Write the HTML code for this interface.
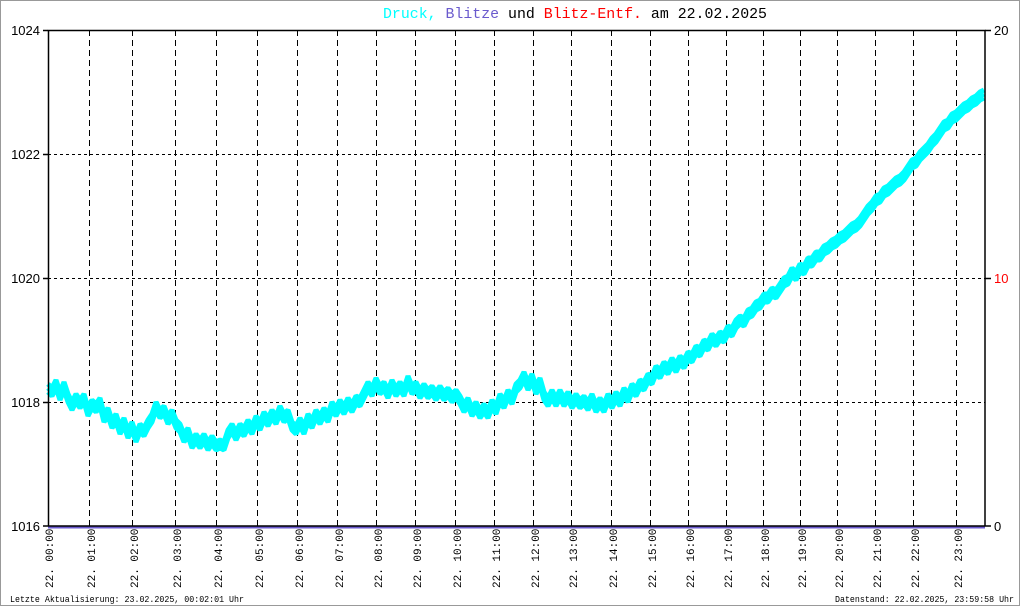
<!DOCTYPE html>
<html><head><meta charset="utf-8"><style>
html,body{margin:0;padding:0;background:#fff}
svg{display:block}
</style></head><body>
<svg width="1020" height="606" viewBox="0 0 1020 606" xmlns="http://www.w3.org/2000/svg" xmlns:xlink="http://www.w3.org/1999/xlink" font-family="Liberation Mono, monospace">
<rect x="0.5" y="0.5" width="1019" height="605" fill="#fff" stroke="#999"/>
<text y="18" font-size="15" x="383" textLength="384" lengthAdjust="spacingAndGlyphs"><tspan fill="#00ffff">Druck,</tspan> <tspan fill="#6a5acd">Blitze</tspan> <tspan fill="#000">und</tspan> <tspan fill="#ff0000">Blitz-Entf.</tspan> <tspan fill="#000">am 22.02.2025</tspan></text>
<g stroke="#000" stroke-width="1" stroke-dasharray="3,3">
<line x1="48" x2="985" y1="154.5" y2="154.5"/><line x1="48" x2="985" y1="278.5" y2="278.5"/><line x1="48" x2="985" y1="402.5" y2="402.5"/>
</g>
<g stroke="#000" stroke-width="1" stroke-dasharray="6,4">
<line x1="89.5" x2="89.5" y1="30" y2="526"/><line x1="132.5" x2="132.5" y1="30" y2="526"/><line x1="175.5" x2="175.5" y1="30" y2="526"/><line x1="216.5" x2="216.5" y1="30" y2="526"/><line x1="257.5" x2="257.5" y1="30" y2="526"/><line x1="297.5" x2="297.5" y1="30" y2="526"/><line x1="337.5" x2="337.5" y1="30" y2="526"/><line x1="376.5" x2="376.5" y1="30" y2="526"/><line x1="415.5" x2="415.5" y1="30" y2="526"/><line x1="455.5" x2="455.5" y1="30" y2="526"/><line x1="494.5" x2="494.5" y1="30" y2="526"/><line x1="533.5" x2="533.5" y1="30" y2="526"/><line x1="571.5" x2="571.5" y1="30" y2="526"/><line x1="611.5" x2="611.5" y1="30" y2="526"/><line x1="650.5" x2="650.5" y1="30" y2="526"/><line x1="688.5" x2="688.5" y1="30" y2="526"/><line x1="726.5" x2="726.5" y1="30" y2="526"/><line x1="763.5" x2="763.5" y1="30" y2="526"/><line x1="800.5" x2="800.5" y1="30" y2="526"/><line x1="837.5" x2="837.5" y1="30" y2="526"/><line x1="875.5" x2="875.5" y1="30" y2="526"/><line x1="913.5" x2="913.5" y1="30" y2="526"/><line x1="956.5" x2="956.5" y1="30" y2="526"/>
</g>
<defs>
<polyline id="c" fill="none" stroke="#00ffff" stroke-width="5" stroke-linejoin="bevel" points="
48,388 52,392 56,384 60,396 64,386 68,398 72,406 76,398 80,404 84,398 88,412 92,404 96,408 100,402 104,418 108,412 112,424 116,418 120,430 124,422 128,434 132,426 136,438 140,428 144,432 148,424 152,418 156,406 160,414 164,410 168,420 172,414 176,424 180,428 184,438 188,432 192,444 196,438 200,444 204,438 208,446 212,440 216,446 220,444 224,446 228,434 232,428 236,436 240,428 244,432 248,424 252,430 256,420 260,426 264,416 268,422 272,414 276,420 280,410 284,418 288,414 292,426 296,430 300,422 304,430 308,418 312,424 316,414 320,420 324,412 328,418 332,406 336,412 340,404 344,410 348,402 352,408 356,400 360,402 364,394 368,386 372,392 376,382 380,390 384,386 388,394 392,384 396,392 400,386 404,392 408,380 412,390 416,386 420,394 424,388 428,394 432,390 436,396 440,390 444,396 448,392 452,398 456,394 460,400 464,408 468,402 472,412 476,406 480,414 484,408 488,414 492,404 496,410 500,398 504,404 508,394 512,400 516,388 520,384 524,376 528,386 532,378 536,390 540,382 544,396 548,402 552,394 556,402 560,394 564,402 568,396 572,404 576,398 580,404 584,400 588,406 592,398 596,408 600,402 604,408 608,398 612,404 616,396 620,402 624,392 628,398 632,388 636,392 640,384 644,386 648,378 652,380 656,370 660,374 664,366 668,370 672,362 676,368 680,360 684,364 688,356 692,358 696,350 700,352 704,344 708,346 712,338 716,342 720,336 724,338 728,330 732,332 736,324 740,320 744,322 748,314 752,312 756,306 760,304 764,298 768,298 772,292 776,294 780,288 784,282 788,280 792,272 796,276 800,268 804,270 808,262 812,262 816,256 820,256 824,250 828,248 832,244 836,242 840,238 844,236 848,232 852,228 856,226 860,222 864,216 868,210 872,206 876,200 880,198 884,192 888,190 892,186 896,182 900,180 904,176 908,170 912,164 916,162 920,156 924,152 928,148 932,142 936,138 940,132 944,126 948,124 952,118 956,116 960,112 964,108 968,106 972,102 976,100 980,96 984,94"/>
</defs>
<use xlink:href="#c" href="#c" transform="translate(0,-4)"/>
<use xlink:href="#c" href="#c" transform="translate(0,4)"/>
<use xlink:href="#c" href="#c"/>
<line x1="48" x2="985" y1="527.5" y2="527.5" stroke="#6a5acd" stroke-width="2"/>
<g stroke="#000" stroke-width="1.5" fill="none">
<polyline points="48.5,526 48.5,30.5 985,30.5 985,526"/>
<line x1="48" x2="985" y1="526" y2="526"/>
<line x1="43" x2="48" y1="30.5" y2="30.5"/><line x1="43" x2="48" y1="154.5" y2="154.5"/><line x1="43" x2="48" y1="278.5" y2="278.5"/><line x1="43" x2="48" y1="402.5" y2="402.5"/><line x1="43" x2="48" y1="526" y2="526"/>
<line x1="985" x2="991" y1="30.5" y2="30.5"/><line x1="985" x2="991" y1="278.5" y2="278.5"/><line x1="985" x2="991" y1="526" y2="526"/>
</g>
<g font-family="Liberation Sans, sans-serif" font-size="13" text-anchor="end" fill="#000">
<text x="40" y="35">1024</text><text x="40" y="159">1022</text><text x="40" y="283">1020</text><text x="40" y="407">1018</text><text x="40" y="531">1016</text>
</g>
<g font-family="Liberation Sans, sans-serif" font-size="13">
<text x="994" y="35">20</text><text x="994" y="283" fill="#ff0000">10</text><text x="994" y="531">0</text>
</g>
<g font-size="11" fill="#000">
<text transform="translate(53,588) rotate(-90)">22. 00:00</text>
<text transform="translate(95,588) rotate(-90)">22. 01:00</text>
<text transform="translate(138,588) rotate(-90)">22. 02:00</text>
<text transform="translate(181,588) rotate(-90)">22. 03:00</text>
<text transform="translate(222,588) rotate(-90)">22. 04:00</text>
<text transform="translate(263,588) rotate(-90)">22. 05:00</text>
<text transform="translate(303,588) rotate(-90)">22. 06:00</text>
<text transform="translate(343,588) rotate(-90)">22. 07:00</text>
<text transform="translate(382,588) rotate(-90)">22. 08:00</text>
<text transform="translate(421,588) rotate(-90)">22. 09:00</text>
<text transform="translate(461,588) rotate(-90)">22. 10:00</text>
<text transform="translate(500,588) rotate(-90)">22. 11:00</text>
<text transform="translate(539,588) rotate(-90)">22. 12:00</text>
<text transform="translate(577,588) rotate(-90)">22. 13:00</text>
<text transform="translate(617,588) rotate(-90)">22. 14:00</text>
<text transform="translate(656,588) rotate(-90)">22. 15:00</text>
<text transform="translate(694,588) rotate(-90)">22. 16:00</text>
<text transform="translate(732,588) rotate(-90)">22. 17:00</text>
<text transform="translate(769,588) rotate(-90)">22. 18:00</text>
<text transform="translate(806,588) rotate(-90)">22. 19:00</text>
<text transform="translate(843,588) rotate(-90)">22. 20:00</text>
<text transform="translate(881,588) rotate(-90)">22. 21:00</text>
<text transform="translate(919,588) rotate(-90)">22. 22:00</text>
<text transform="translate(962,588) rotate(-90)">22. 23:00</text>
</g>
<text x="10" y="602" font-size="9" textLength="234" lengthAdjust="spacingAndGlyphs">Letzte Aktualisierung: 23.02.2025, 00:02:01 Uhr</text>
<text x="835" y="602" font-size="9" textLength="179" lengthAdjust="spacingAndGlyphs">Datenstand: 22.02.2025, 23:59:58 Uhr</text>
</svg>
</body></html>
